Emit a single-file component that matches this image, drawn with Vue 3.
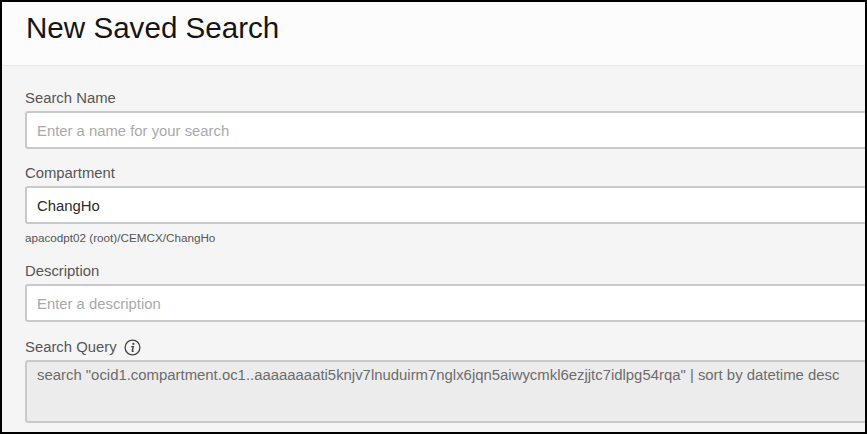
<template>
  <div class="frame">
    <div class="panel">
      <header class="panel-header">
        <h1>New Saved Search</h1>
      </header>
      <form class="panel-body" @submit.prevent>
        <div class="field">
          <label>Search Name</label>
          <input type="text" placeholder="Enter a name for your search" />
        </div>
        <div class="field">
          <label>Compartment</label>
          <input type="text" value="ChangHo" />
          <p class="hint">apacodpt02 (root)/CEMCX/ChangHo</p>
        </div>
        <div class="field">
          <label>Description</label>
          <input type="text" placeholder="Enter a description" />
        </div>
        <div class="field">
          <label class="with-icon">
            Search Query
            <svg class="info" width="17" height="17" viewBox="0 0 17 17">
              <circle cx="8.5" cy="8.5" r="7.4" fill="none" stroke="#444" stroke-width="1.3" />
              <circle cx="9.4" cy="4.9" r="1.1" fill="#444" />
              <path d="M7.2 7.6h2.1l-1 4.1q-.1.7.5.6l.9-.4" fill="none" stroke="#444" stroke-width="1.4" />
            </svg>
          </label>
          <div class="query">{{ query }}</div>
        </div>
      </form>
    </div>
  </div>
</template>

<script setup>
const query = 'search "ocid1.compartment.oc1..aaaaaaaati5knjv7lnuduirm7nglx6jqn5aiwycmkl6ezjjtc7idlpg54rqa" | sort by datetime desc'
</script>

<style>
html, body {
  margin: 0;
  background: #fff;
}
</style>

<style scoped>
.frame {
  width: 867px;
  height: 434px;
  box-sizing: border-box;
  border: 2px solid #000;
  overflow: hidden;
  font-family: "Liberation Sans", Arial, sans-serif;
}

.panel {
  height: 100%;
  background: #f5f5f5;
}

.panel-header {
  height: 64px;
  box-sizing: border-box;
  padding: 9px 0 0 24px;
  background: #fcfcfc;
  border-bottom: 1px solid #e9e9e9;
}

.panel-header h1 {
  margin: 0;
  font-size: 29.6px;
  line-height: 34px;
  font-weight: 400;
  color: #161513;
}

.panel-body {
  padding: 24px 0 0 23px;
}

.field {
  margin-bottom: 16px;
}

.field label {
  display: block;
  font-size: 14.85px;
  line-height: 16px;
  color: #555;
  margin-bottom: 5px;
}

.with-icon {
  display: flex !important;
  align-items: center;
  gap: 7px;
  height: 17px;
}

.info {
  margin-top: 1px;
}

.field input {
  display: block;
  width: 100%;
  height: 38px;
  box-sizing: border-box;
  padding: 1px 10px 0;
  border: solid #c7cacd;
  border-width: 2px 0 2px 2px;
  border-radius: 3px 0 0 3px;
  background: #fff;
  font: 14.85px "Liberation Sans", Arial, sans-serif;
  color: #2c2c2c;
  outline: none;
}

.field input::placeholder {
  color: #a9a9a9;
  opacity: 1;
}

.hint {
  margin: 7px 0 19px;
  font-size: 11.7px;
  line-height: 13px;
  color: #555;
}

.query {
  height: 63px;
  box-sizing: border-box;
  padding: 5px 10px;
  border: solid #c7cacd;
  border-width: 2px 0 2px 2px;
  border-radius: 3px 0 0 3px;
  background: #ececec;
  font-size: 14.9px;
  line-height: 16px;
  color: #6c6c6c;
  white-space: nowrap;
}
</style>
